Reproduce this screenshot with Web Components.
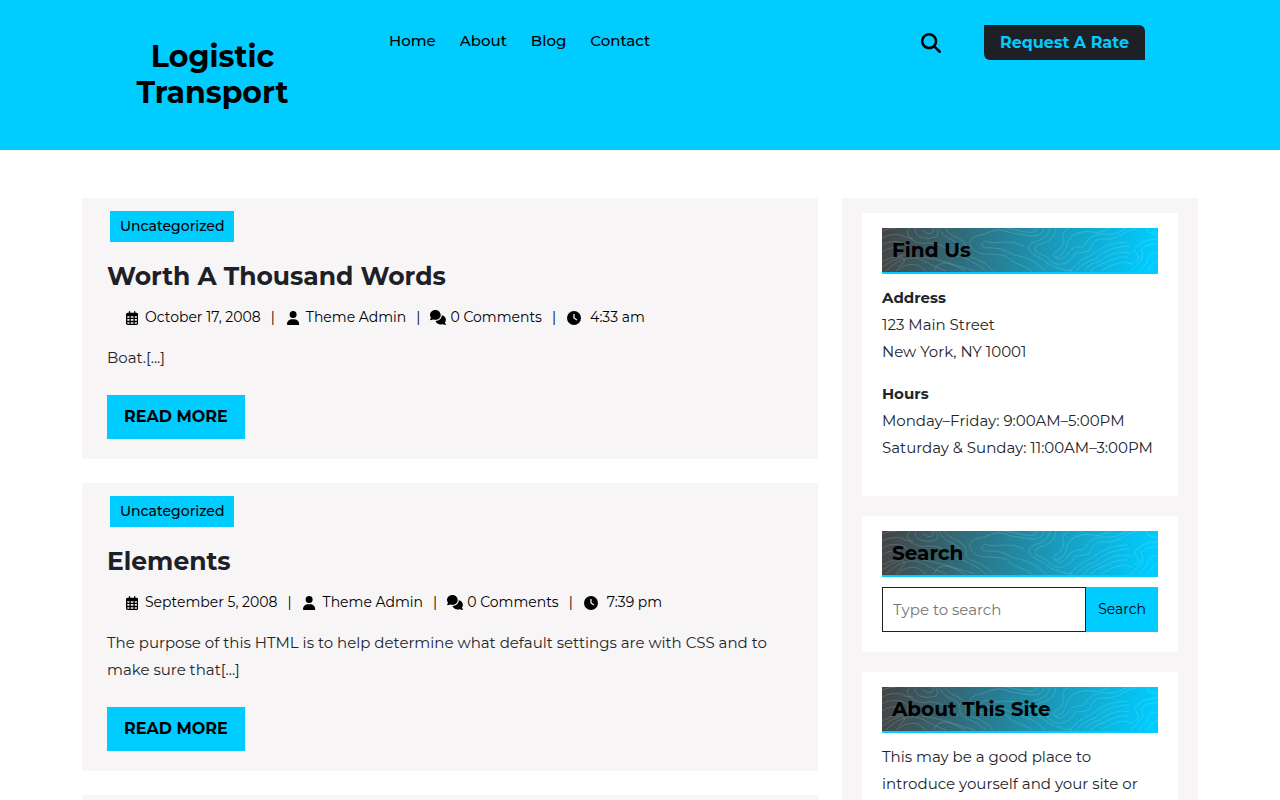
<!DOCTYPE html>
<html lang="en">
<head>
<meta charset="utf-8">
<meta name="viewport" content="width=device-width, initial-scale=1">
<title>Logistic Transport</title>
<style>
    :root {
        --accent : #00ccff;
        --dark : #1d2027;
        --panel : #f7f5f6;
    }

    body {
        margin : 0;
        background : #fff;
        color : #212529;
        font : 15px/27px Montserrat, Inter, "Open Sans", sans-serif;
    }

    .layout {
        display : grid;
        grid-template-columns : repeat(3, minmax(0, 1fr));
        gap : 24px;
        max-width : 1116px;
        margin : 48px auto 0;
    }

    main {
        grid-column : span 2;
        display : flex;
        flex-direction : column;
        gap : 24px;
    }

    p {
        margin : 0 0 15px;
    }

    @media (max-width: 900px) {
        .layout { grid-template-columns : minmax(0, 1fr); margin : 24px 12px 0; }
        main { grid-column : auto; }
    }
</style>
</head>
<body>

<site-header name="Logistic Transport">
    <nav-link href="#home">Home</nav-link>
    <nav-link href="#about">About</nav-link>
    <nav-link href="#blog">Blog</nav-link>
    <nav-link href="#contact">Contact</nav-link>
</site-header>

<div class="layout">
    <main>
        <post-card category="Uncategorized" heading="Worth A Thousand Words" date="October 17, 2008" author="Theme Admin" comments="0 Comments" time="4:33 am">Boat.[...]</post-card>
        <post-card category="Uncategorized" heading="Elements" date="September 5, 2008" author="Theme Admin" comments="0 Comments" time="7:39 pm">The purpose of this HTML is to help determine what default settings are with CSS and to make sure that[...]</post-card>
        <post-card></post-card>
    </main>
    <side-bar>
        <side-widget heading="Find Us">
            <p><strong>Address</strong><br>123 Main Street<br>New York, NY 10001</p>
            <p><strong>Hours</strong><br>Monday–Friday: 9:00AM–5:00PM<br>Saturday &amp; Sunday: 11:00AM–3:00PM</p>
        </side-widget>
        <side-widget heading="Search">
            <search-form></search-form>
        </side-widget>
        <side-widget heading="About This Site">
            <p>This may be a good place to introduce yourself and your site or</p>
        </side-widget>
    </side-bar>
</div>

<script>
const ICONS = {
    search : ['0 0 512 512', 'M416 208c0 45.9-14.9 88.3-40 122.7L502.6 457.4c12.5 12.5 12.5 32.8 0 45.3s-32.8 12.5-45.3 0L330.7 376c-34.4 25.2-76.8 40-122.7 40C93.1 416 0 322.9 0 208S93.1 0 208 0S416 93.1 416 208zM208 352a144 144 0 1 0 0-288 144 144 0 1 0 0 288z'],
    calendar : ['0 0 448 512', 'M128 0c13 0 24 11 24 24v40h144V24c0-13 11-24 24-24s24 11 24 24v40h40c35 0 64 29 64 64v320c0 35-29 64-64 64H64c-35 0-64-29-64-64V128c0-35 29-64 64-64h40V24c0-13 11-24 24-24zM48 192v56h80v-56zM176 192v56h96v-56zM320 192v56h80v-56zM48 296v64h80v-64zM176 296v64h96v-64zM320 296v64h80v-64zM48 408v40c0 9 7 16 16 16h64v-56zM176 408v56h96v-56zM320 408v56h64c9 0 16-7 16-16v-40z'],
    user : ['0 0 448 512', 'M224 256A128 128 0 1 0 224 0a128 128 0 1 0 0 256zm-45.7 48C79.8 304 0 383.8 0 482.3C0 498.7 13.3 512 29.7 512H418.3c16.4 0 29.7-13.3 29.7-29.7C448 383.8 368.2 304 269.7 304H178.3z'],
    comments : ['0 0 16 15', 'M5.4 0C8.4 0 10.7 2.2 10.7 4.9S8.4 9.8 5.4 9.8C4.6 9.8 3.8 9.7 3.1 9.4L.6 10.2Q0 10.2 .2 9.6L1 7.6C.4 6.8 0 5.9 0 4.9C0 2.2 2.4 0 5.4 0zM11.7 5.2C14.1 5.6 15.9 7.4 15.9 9.7C15.9 10.8 15.5 11.8 14.9 12.6L15.9 14.4Q16.1 15 15.5 15L12.9 14.2C12.2 14.4 11.5 14.5 10.8 14.5C8.3 14.5 6.2 13 5.6 10.9C9 10.8 11.8 8.4 11.8 5.5z'],
    clock : ['0 0 512 512', 'M256 0a256 256 0 1 1 0 512A256 256 0 1 1 256 0zM232 120V256c0 8 4 15.5 10.7 20l96 64c11 7.4 25.9 4.4 33.3-6.7s4.4-25.9-6.7-33.3L280 243.2V120c0-13.3-10.7-24-24-24s-24 10.7-24 24z']
};

// contour lines behind the widget headings
const CONTOURS = [
    'M0 3Q8 0 15 0', 'M0 10Q9 5 20 7Q23 10 31 10',
    'M0 17Q8 12 18 14Q27 16 26 22Q25 27 18 28Q8 29 0 34',
    'M0 24Q9 18 18 20', 'M4 43Q15 32 27 30Q37 29 44 34Q53 39 64 43',
    'M0 39Q11 31 20 29Q25 32 20 36L16 39', 'M14 43Q25 34 36 37L44 43',
    'M28 0Q22 5 29 11Q37 17 46 15Q58 14 66 22Q72 28 77 29',
    'M34 0Q31 5 38 9Q46 12 54 9Q58 5 53 0',
    'M41 2Q44 7 50 5Q53 3 50 0',
    'M57 0Q60 8 70 12Q79 16 78 23Q77 29 87 32Q97 37 104 43',
    'M63 0Q66 6 76 10Q86 15 84 24Q84 28 94 31Q105 35 111 43',
    'M52 43Q55 34 65 35Q76 38 83 43', 'M40 29Q53 31 64 34Q76 38 93 43',
    'M162 0Q160 9 149 8Q139 6 129 5Q119 0 110 3Q101 7 94 8Q85 12 89 19Q95 27 106 26Q117 26 124 28Q129 34 136 36Q145 39 150 43',
    'M155 0Q153 6 144 4Q133 2 124 0',
    'M142 18Q132 13 122 14Q111 16 103 13Q96 17 103 20Q115 19 124 23Q132 28 141 29Q151 32 157 37L163 43',
    'M227 0Q219 6 211 4Q199 2 190 8Q184 13 184 20Q181 27 175 29Q169 29 173 24Q181 20 182 12Q178 4 187 0',
    'M245 0Q235 7 224 6Q212 5 205 13Q203 20 195 19Q188 20 185 27Q178 34 173 29',
    'M168 0Q166 9 158 12Q145 15 147 22Q152 28 160 31Q167 38 180 41Q185 43 190 43',
    'M174 0Q173 10 164 14Q150 17 154 24Q160 26 165 29Q171 38 181 36Q190 33 193 25Q201 25 207 23Q211 12 218 11Q231 12 239 7Q246 2 256 0',
    'M188 43Q197 32 208 28Q218 20 227 17Q238 14 245 14',
    'M194 43Q202 34 213 31Q223 22 233 20Q240 18 248 18',
    'M202 43Q208 35 218 33Q229 25 239 24L249 25',
    'M208 43Q215 37 225 34Q236 28 246 29', 'M219 43Q229 36 240 34L251 36',
    'M265 0Q263 4 272 6L276 6', 'M276 11Q262 11 257 17Q249 20 255 26Q259 30 253 34',
    'M276 16Q264 15 259 22Q263 28 258 33Q253 40 249 43',
    'M276 25Q266 24 265 34L257 43', 'M276 33Q270 34 266 43'
];


class FaIcon extends HTMLElement {
    connectedCallback(){
        this.attachShadow({ mode : 'open' });
        const [box, path] = ICONS[this.getAttribute('name')];
        this.shadowRoot.innerHTML = `
            <style>
                :host { display: inline-flex; justify-content: center; }
                svg { height: var(--icon-size, 14px); fill: #000; }
            </style>
            <svg viewBox="${box}" aria-hidden="true"><path fill-rule="evenodd" d="${path}"/></svg>
        `;
    }
}


class NavLink extends HTMLElement {
    connectedCallback(){
        this.attachShadow({ mode : 'open' });
        this.shadowRoot.innerHTML = `
            <style>
                :host { display: block; }
                a { color: #000; font-weight: 500; text-decoration: none; }
                a:hover { color: #fff; }
            </style>
            <a href="${this.getAttribute('href')}"><slot></slot></a>
        `;
    }
}


class SiteHeader extends HTMLElement {
    static get styles(){
        return `
            :host {
                display: block;
                background: var(--accent);
            }

            header {
                display: grid;
                grid-template-columns: repeat(12, minmax(0, 1fr));
                column-gap: 24px;
                max-width: 1116px;
                min-height: 150px;
                margin: 0 auto;
            }

            h1 {
                grid-column: span 3;
                margin: 39px 48px;
                font-size: 30px;
                line-height: 36px;
                font-weight: 700;
                text-align: center;
            }

            h1 a { color: #000; text-decoration: none; }

            nav {
                grid-column: span 5;
                display: flex;
                gap: 24px;
                padding: 27px 0 0 22px;
            }

            .tools {
                grid-column: span 4;
                display: flex;
                justify-content: flex-end;
                align-items: flex-start;
                gap: 43px;
                padding: 25px 53px 0 0;
            }

            button {
                display: flex;
                align-items: center;
                height: 35px;
                padding: 0;
                border: 0;
                background: none;
                --icon-size: 20px;
            }

            .rate {
                padding: 0 16px;
                border-radius: 0 6px;
                background: var(--dark);
                color: var(--accent);
                font-size: 16px;
                line-height: 35px;
                font-weight: 700;
                text-decoration: none;
                white-space: nowrap;
            }

            @media (max-width: 900px) {
                header { display: flex; flex-wrap: wrap; padding-bottom: 24px; }
            }
        `;
    }

    connectedCallback(){
        this.attachShadow({ mode : 'open' });
        this.shadowRoot.innerHTML = `
            <style>${SiteHeader.styles}</style>
            <header>
                <h1><a href="#">${this.getAttribute('name')}</a></h1>
                <nav><slot></slot></nav>
                <div class="tools">
                    <button type="button" aria-label="Open search"><fa-icon name="search"></fa-icon></button>
                    <a class="rate" href="#rate">Request A Rate</a>
                </div>
            </header>
        `;
    }
}


class PostCard extends HTMLElement {
    static get styles(){
        return `
            :host {
                display: block;
                min-height: 240px;
                background: var(--panel);
            }

            article {
                padding: 13px 25px 20px;
            }

            .category {
                display: inline-block;
                margin-left: 3px;
                padding: 0 10px;
                background: var(--accent);
                color: #000;
                font-size: 14px;
                line-height: 31px;
                font-weight: 500;
                text-decoration: none;
                vertical-align: top;
            }

            h2 {
                margin: 18px 0 12px;
                font-size: 25px;
                line-height: 32px;
                font-weight: 700;
            }

            h2 a { color: var(--dark); text-decoration: none; }

            .meta {
                display: flex;
                flex-wrap: wrap;
                align-items: center;
                gap: 0 10px;
                margin-bottom: 13px;
                padding-left: 17px;
                color: #000;
                font-size: 14px;
                line-height: 27px;
            }

            .meta span { display: flex; align-items: center; gap: 5px; }
            .meta .comments { gap: 4px; --icon-size: 15px; }
            .meta .time { gap: 8px; }
            .meta fa-icon { width: 16px; }

            p { margin: 0 0 24px; }

            .more {
                display: inline-block;
                padding: 0 17px;
                background: var(--accent);
                color: #000;
                font-size: 16px;
                line-height: 44px;
                font-weight: 700;
                text-decoration: none;
                vertical-align: top;
            }
        `;
    }

    connectedCallback(){
        this.attachShadow({ mode : 'open' });
        this.render();
    }

    render(){
        const get = name => this.getAttribute(name);
        const body = !get('heading') ? '' : `
            <article>
                <a class="category" href="#category">${get('category')}</a>
                <h2><a href="#post">${get('heading')}</a></h2>
                <div class="meta">
                    <span><fa-icon name="calendar"></fa-icon>${get('date')}</span>|
                    <span><fa-icon name="user"></fa-icon>${get('author')}</span>|
                    <span class="comments"><fa-icon name="comments"></fa-icon>${get('comments')}</span>|
                    <span class="time"><fa-icon name="clock"></fa-icon>${get('time')}</span>
                </div>
                <p><slot></slot></p>
                <a class="more" href="#post">READ MORE</a>
            </article>
        `;
        this.shadowRoot.innerHTML = `<style>${PostCard.styles}</style>${body}`;
    }
}


class SideBar extends HTMLElement {
    connectedCallback(){
        this.attachShadow({ mode : 'open' });
        this.shadowRoot.innerHTML = `
            <style>
                :host { display: block; background: var(--panel); }
                aside { display: flex; flex-direction: column; gap: 20px; padding: 15px 20px; }
            </style>
            <aside><slot></slot></aside>
        `;
    }
}


class SideWidget extends HTMLElement {
    static get styles(){
        return `
            :host {
                display: block;
                padding: 15px 20px 20px;
                background: #fff;
            }

            h3 {
                position: relative;
                margin: 0 0 10px;
                padding: 0 10px;
                border-bottom: 2px solid var(--accent);
                background: linear-gradient(100deg, #444 0%, var(--accent) 97%);
                color: #000;
                font-size: 20px;
                line-height: 44px;
                font-weight: 700;
            }

            h3 svg {
                position: absolute;
                inset: 0;
                width: 100%;
                height: 100%;
                fill: none;
                stroke: #fff;
                stroke-opacity: .15;
            }

            h3 span { position: relative; }
        `;
    }

    connectedCallback(){
        this.attachShadow({ mode : 'open' });
        this.shadowRoot.innerHTML = `
            <style>${SideWidget.styles}</style>
            <h3>
                <svg viewBox="0 0 276 44" preserveAspectRatio="xMidYMid slice" aria-hidden="true">${CONTOURS.map(d => `<path d="${d}"/>`).join('')}</svg>
                <span>${this.getAttribute('heading')}</span>
            </h3>
            <slot></slot>
        `;
    }
}


class SearchForm extends HTMLElement {
    static get styles(){
        return `
            :host { display: block; }
            form { display: flex; height: 45px; }

            input {
                flex: 1;
                min-width: 0;
                box-sizing: border-box;
                padding: 0 10px;
                border: 1px solid var(--dark);
                border-radius: 0;
                background: #fff;
                font: inherit;
            }

            input::placeholder { color: #757575; }

            button {
                padding: 0 12px;
                border: 0;
                background: var(--accent);
                color: #000;
                font: inherit;
                font-size: 14px;
            }
        `;
    }

    connectedCallback(){
        this.attachShadow({ mode : 'open' });
        this.shadowRoot.innerHTML = `
            <style>${SearchForm.styles}</style>
            <form role="search">
                <input type="search" placeholder="Type to search" aria-label="Search for">
                <button type="submit">Search</button>
            </form>
        `;
    }
}

customElements.define('fa-icon', FaIcon);
customElements.define('nav-link', NavLink);
customElements.define('site-header', SiteHeader);
customElements.define('post-card', PostCard);
customElements.define('side-bar', SideBar);
customElements.define('side-widget', SideWidget);
customElements.define('search-form', SearchForm);
</script>
</body>
</html>
